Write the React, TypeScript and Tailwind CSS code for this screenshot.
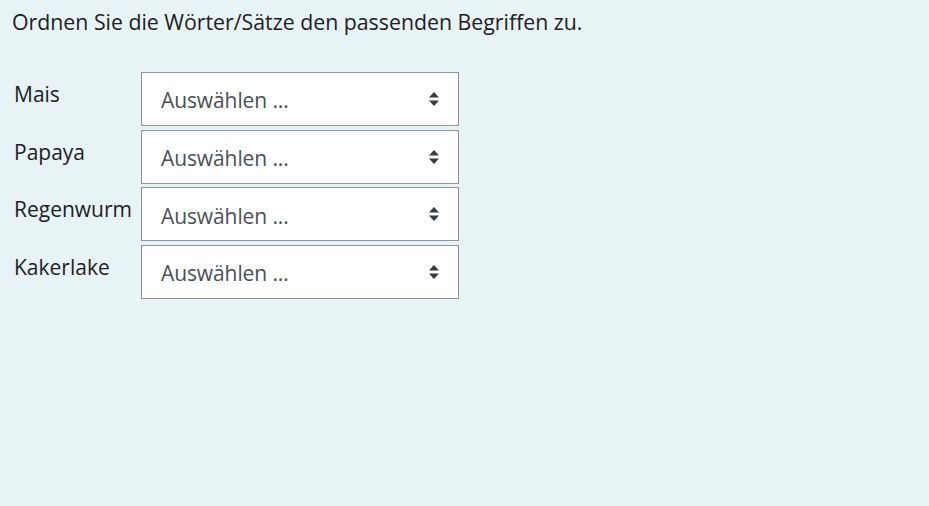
import React from 'react';

const items = ['Mais', 'Papaya', 'Regenwurm', 'Kakerlake'];

// Bootstrap-style double caret for custom selects
const SelectCaret: React.FC = () => (
  <svg width="12" height="16" viewBox="0 0 12 16" className="shrink-0">
    <path d="M6 1 L11 6.5 H1 Z" fill="#343a40" />
    <path d="M6 15 L11 9.5 H1 Z" fill="#343a40" />
  </svg>
);

const App: React.FC = () => {
  return (
    <div
      className="w-[929px] h-[506px] bg-[#e7f3f5] text-[#1d2125] overflow-hidden"
      style={{ fontFamily: '"Open Sans", "Noto Sans", sans-serif' }}
    >
      <p className="pl-[12px] pt-[6px] text-[21.3px] leading-[32px]">
        Ordnen Sie die Wörter/Sätze den passenden Begriffen zu.
      </p>
      <div className="mt-[34px] flex flex-col gap-[3.67px]">
        {items.map((item) => (
          <div key={item} className="flex items-start">
            <div className="w-[141px] pl-[14px] pt-[7px] text-[21px] leading-[30px]">{item}</div>
            <div className="w-[318px] h-[54px] bg-white border border-[#8f959e] flex items-center justify-between pl-[19px] pr-[18px]">
              <span className="pt-[4px] text-[21px] text-[#495057] tracking-[-0.1px]">Auswählen ...</span>
              <SelectCaret />
            </div>
          </div>
        ))}
      </div>
    </div>
  );
};

export default App;
